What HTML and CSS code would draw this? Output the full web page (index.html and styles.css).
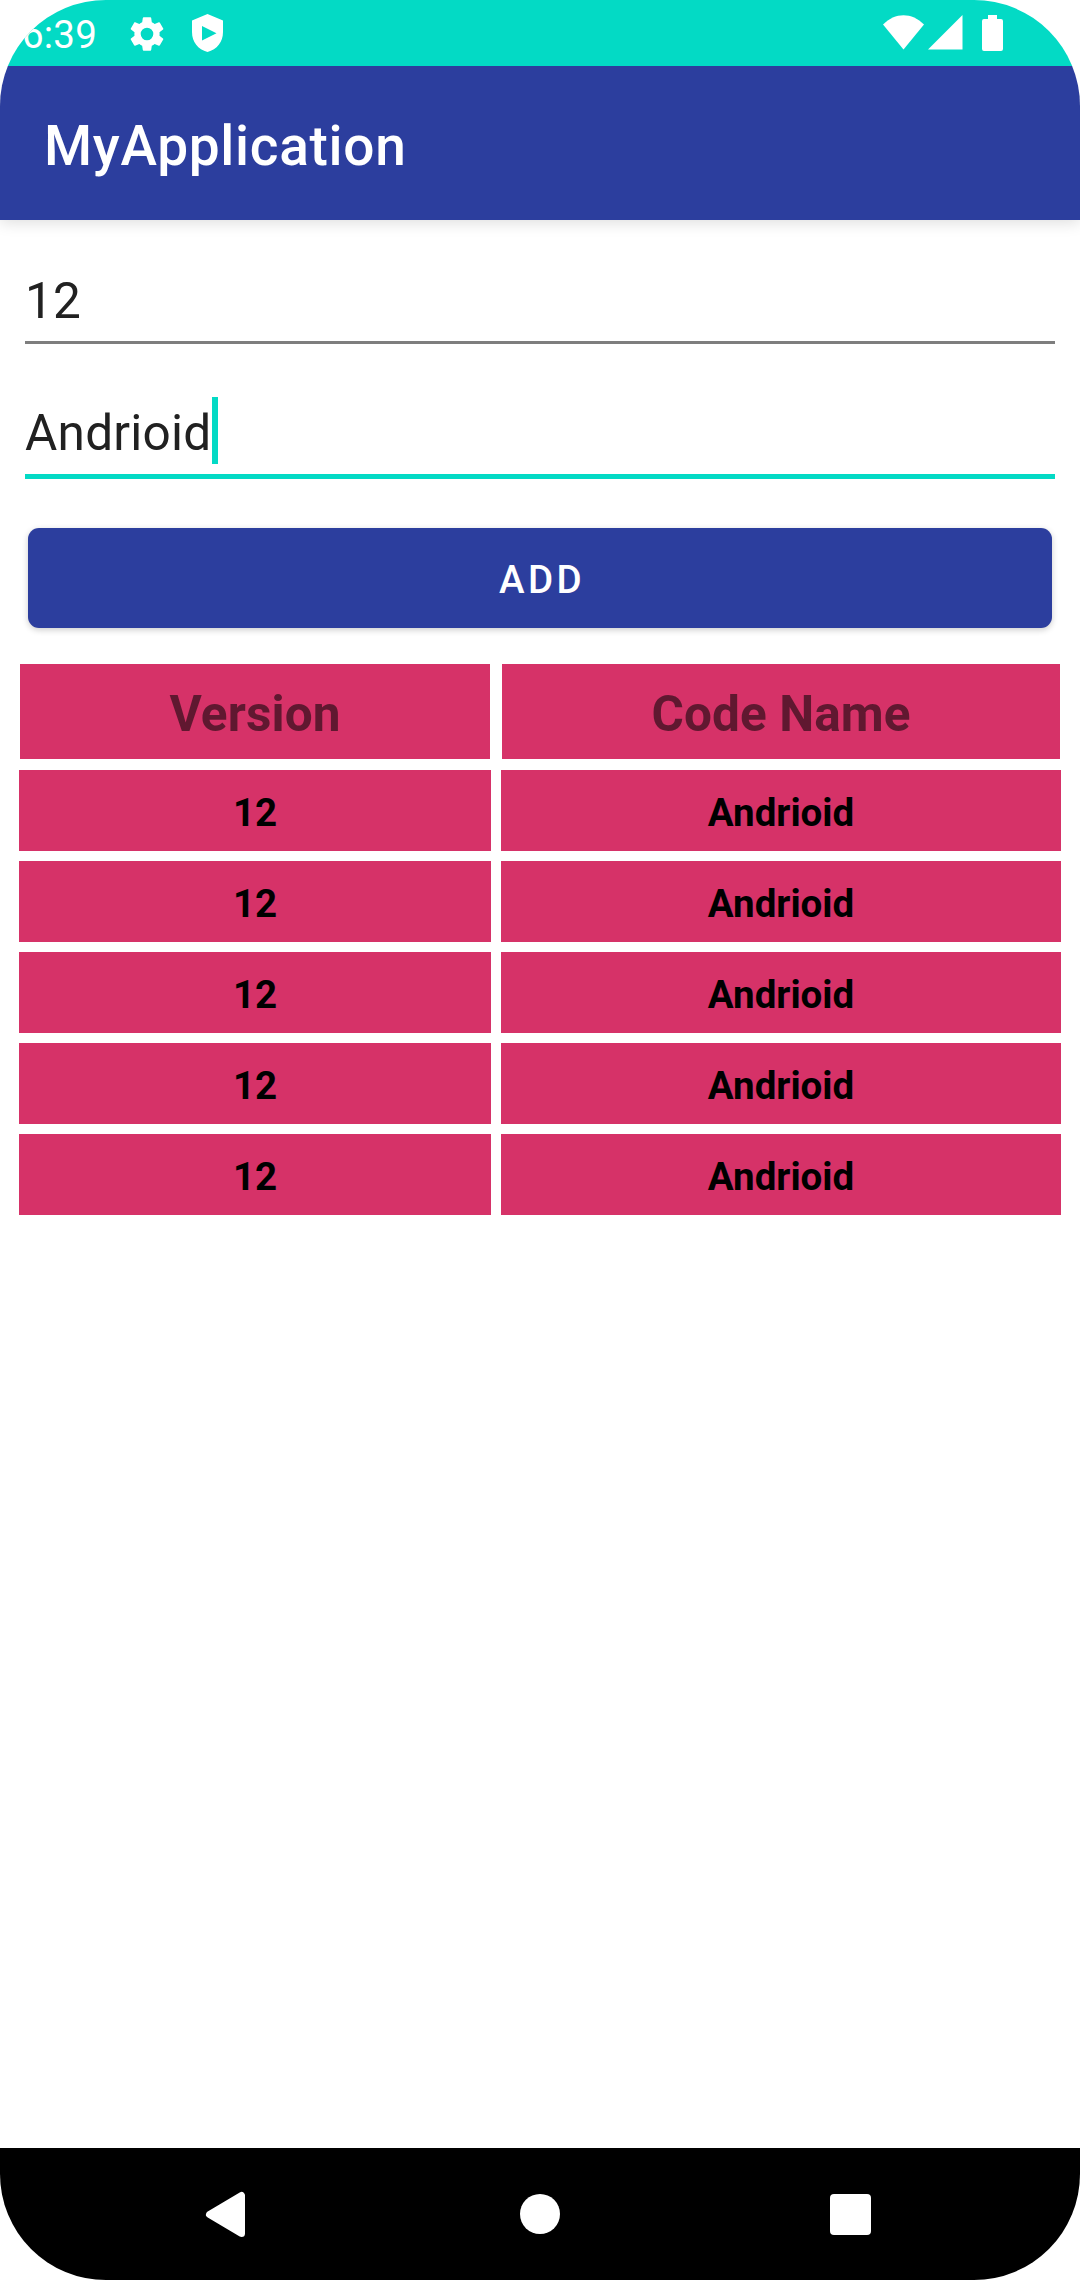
FILE: index.html
```html
<!DOCTYPE html>
<html lang="en">
<head>
<meta charset="utf-8">
<title>MyApplication</title>
<link rel="stylesheet" href="styles.css">
</head>
<body>
<div class="screen">
  <header class="status-bar">
    <span class="clock">6:39</span>
    <svg class="icon-gear" viewBox="0 0 24 24"><path d="M19.14 12.94c.04-.3.06-.61.06-.94 0-.32-.02-.64-.07-.94l2.03-1.58a.49.49 0 0 0 .12-.61l-1.92-3.32a.488.488 0 0 0-.59-.22l-2.39.96c-.5-.38-1.03-.7-1.62-.94l-.36-2.54a.484.484 0 0 0-.48-.41h-3.84c-.24 0-.43.17-.47.41l-.36 2.54c-.59.24-1.13.57-1.62.94l-2.39-.96c-.22-.08-.47 0-.59.22L2.74 8.87c-.12.21-.08.47.12.61l2.03 1.58c-.05.3-.09.63-.09.94s.02.64.07.94l-2.03 1.58a.49.49 0 0 0-.12.61l1.92 3.32c.12.22.37.29.59.22l2.39-.96c.5.38 1.03.7 1.62.94l.36 2.54c.05.24.24.41.48.41h3.84c.24 0 .44-.17.47-.41l.36-2.54c.59-.24 1.13-.56 1.62-.94l2.39.96c.22.08.47 0 .59-.22l1.92-3.32c.12-.22.07-.47-.12-.61l-2.01-1.58zM12 15.6A3.6 3.6 0 1 1 12 8.4a3.6 3.6 0 0 1 0 7.2z"/></svg>
    <svg class="icon-shield" viewBox="0 0 31 38"><path fill-rule="evenodd" d="M15.5 0 31 6.500V18c0 10-6 17.500-15.500 20C6 35.500 0 28 0 18V6.500zM10 12v14.500L24.500 19.200z"/></svg>
    <svg class="icon-wifi" viewBox="0 0 41 35"><path d="M0 9.500C12-3 29-3 41 9.500L20.500 34.500z"/></svg>
    <svg class="icon-signal" viewBox="0 0 35 35"><path d="M34.500 0v34.500H0z"/></svg>
    <svg class="icon-battery" viewBox="0 0 21 36"><path d="M6 0h9v4h4a2 2 0 0 1 2 2v28a2 2 0 0 1-2 2H2a2 2 0 0 1-2-2V6a2 2 0 0 1 2-2h4z"/></svg>
  </header>
  <div class="app-bar"><h1 class="title">MyApplication</h1></div>
  <main class="content">
    <div class="field"><span class="value">12</span></div>
    <div class="field field-active"><span class="value">Andrioid</span><span class="caret"></span></div>
    <button class="add">ADD</button>
    <div class="row heading"><div class="cell">Version</div><div class="cell">Code Name</div></div>
    <div class="rows">
      <div class="row"><div class="cell">12</div><div class="cell">Andrioid</div></div>
      <div class="row"><div class="cell">12</div><div class="cell">Andrioid</div></div>
      <div class="row"><div class="cell">12</div><div class="cell">Andrioid</div></div>
      <div class="row"><div class="cell">12</div><div class="cell">Andrioid</div></div>
      <div class="row"><div class="cell">12</div><div class="cell">Andrioid</div></div>
    </div>
  </main>
  <nav class="nav-bar">
    <svg class="icon-back" viewBox="0 0 39 45"><path d="M3.500 22.500 35.500 3.500v38z"/></svg>
    <span class="icon-home"></span>
    <span class="icon-recent"></span>
  </nav>
</div>
</body>
</html>
```
FILE: styles.css
```css
* { box-sizing: border-box; }
body { margin: 0; background: #fff; font-family: Roboto, sans-serif; }
svg { display: block; fill: #fff; flex: none; }

.screen {
  width: 1080px;
  height: 2280px;
  display: flex;
  flex-direction: column;
  background: #fff;
  border-radius: 106px;
  overflow: hidden;
}

.status-bar {
  height: 66px;
  flex: none;
  position: relative;
  z-index: 1;
  display: flex;
  align-items: flex-start;
  padding-left: 22px;
  background: #03dac5;
  color: #fff;
}
.clock { width: 103px; font-size: 38.500px; line-height: 70px; letter-spacing: .2px; }
.icon-gear { width: 42px; height: 42px; margin: 12.500px 0 0 .500px; }
.icon-shield { width: 31px; height: 38px; margin: 14px 0 0 24.500px; }
.icon-wifi { width: 41px; height: 35px; margin: 15px 0 0 660px; }
.icon-signal { width: 35px; height: 35px; margin: 15px 0 0 3.500px; }
.icon-battery { width: 21px; height: 36px; margin: 15px 0 0 19.500px; }

.app-bar {
  height: 154px;
  flex: none;
  padding: 6px 0 0 44px;
  background: #2c3e9e;
  box-shadow: 0 3px 14px rgba(0, 0, 0, .13);
}
.title { margin: 0; color: #fff; font-size: 55px; font-weight: 500; line-height: 148px; letter-spacing: .7px; }

.content { flex: 1; padding: 39px 19px 0; }
.field {
  height: 85px;
  margin: 0 6px;
  display: flex;
  border-bottom: 3px solid #7e7e7e;
  color: #212121;
  font-size: 49.500px;
  line-height: 84px;
  letter-spacing: .25px;
}
.field-active {
  height: 88px;
  margin-top: 47px;
  border-bottom: 5px solid #03dac5;
}
.caret { width: 6px; height: 67px; margin-top: 6px; background: #03dac5; }

.add {
  display: block;
  width: 1024px;
  height: 100px;
  margin: 49px 9px 36px;
  padding: 4px 0 0 4px;
  border: 0;
  border-radius: 11px;
  background: #2c3e9e;
  box-shadow: 0 2px 6px rgba(0, 0, 0, .2);
  color: #fff;
  font: 500 38.500px/96px Roboto, sans-serif;
  letter-spacing: .0892em;
}

.row {
  display: grid;
  grid-template-columns: 472px 560px;
  gap: 10px;
  text-align: center;
  font-size: 38.500px;
  font-weight: 700;
  line-height: 76px;
  color: #000;
}
.cell { height: 81px; padding-top: 5px; background: #d63268; }
.heading {
  grid-template-columns: 470px 558px;
  gap: 12px;
  margin: 0 1px 11px;
  font-size: 49.500px;
  line-height: 90px;
  letter-spacing: .1px;
  color: #601830;
}
.heading .cell { height: 95px; }
.rows { display: grid; gap: 10px; }

.nav-bar {
  height: 132px;
  flex: none;
  display: flex;
  align-items: center;
  padding-left: 206px;
  background: #000;
}
.icon-back { width: 39px; height: 45px; overflow: visible; }
.icon-back path { stroke: #fff; stroke-width: 7px; stroke-linejoin: round; }
.icon-home { width: 40px; height: 40px; margin-left: 275px; border-radius: 50%; background: #fff; }
.icon-recent { width: 41px; height: 41px; margin-left: 270px; border-radius: 4px; background: #fff; }
```
